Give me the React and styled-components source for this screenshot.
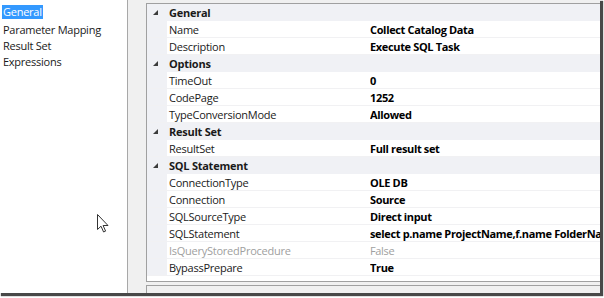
import React from 'react'
import styled, { createGlobalStyle } from 'styled-components'

const GlobalStyle = createGlobalStyle`
    html, body {
        margin: 0;
        padding: 0;
        background: #ffffff;
    }
    body {
        font-family: "Segoe UI", "Open Sans", "Noto Sans", sans-serif;
        font-size: 11px;
        letter-spacing: -0.25px;
        color: #1a1a1a;
    }
`

const pages = ['General', 'Parameter Mapping', 'Result Set', 'Expressions']

const groups = [
    {
        title: 'General',
        rows: [
            { name: 'Name', value: 'Collect Catalog Data' },
            { name: 'Description', value: 'Execute SQL Task' },
        ],
    },
    {
        title: 'Options',
        rows: [
            { name: 'TimeOut', value: '0' },
            { name: 'CodePage', value: '1252' },
            { name: 'TypeConversionMode', value: 'Allowed' },
        ],
    },
    {
        title: 'Result Set',
        rows: [{ name: 'ResultSet', value: 'Full result set' }],
    },
    {
        title: 'SQL Statement',
        rows: [
            { name: 'ConnectionType', value: 'OLE DB' },
            { name: 'Connection', value: 'Source' },
            { name: 'SQLSourceType', value: 'Direct input' },
            { name: 'SQLStatement', value: 'select p.name ProjectName,f.name FolderName' },
            { name: 'IsQueryStoredProcedure', value: 'False', disabled: true },
            { name: 'BypassPrepare', value: 'True' },
        ],
    },
]

function Expander() {
    return (
        <ExpanderBox>
            <svg width="5" height="5" viewBox="0 0 5 5">
                <polygon points="5,0 5,5 0,5" fill="#3c3c3c" />
            </svg>
        </ExpanderBox>
    )
}

function Pointer() {
    return (
        <Cursor>
            <svg width="12" height="19" viewBox="0 0 12 19">
                <path
                    d="M0.5 0.5 L0.5 15.5 L4 12.2 L6.6 18 L8.6 17.1 L6.1 11.5 L11 11.5 Z"
                    fill="#ffffff"
                    stroke="#333333"
                    strokeWidth="1"
                    strokeLinejoin="round"
                />
            </svg>
        </Cursor>
    )
}

function App() {
    return (
        <>
            <GlobalStyle />
            <Frame>
                <Window>
                    <PageList>
                        {pages.map((page, i) => (
                            <PageItem key={page} $selected={i === 0}>
                                <PageLabel $selected={i === 0}>{page}</PageLabel>
                            </PageItem>
                        ))}
                        <Pointer />
                    </PageList>
                    <RightSide>
                        <Grid>
                            {groups.map((group) => (
                                <React.Fragment key={group.title}>
                                    <CategoryRow>
                                        <Gutter $category>
                                            <Expander />
                                        </Gutter>
                                        <CategoryTitle>{group.title}</CategoryTitle>
                                    </CategoryRow>
                                    {group.rows.map((row) => (
                                        <PropRow key={row.name}>
                                            <Gutter />
                                            <PropName $disabled={row.disabled}>{row.name}</PropName>
                                            <PropValue $disabled={row.disabled}>{row.value}</PropValue>
                                        </PropRow>
                                    ))}
                                </React.Fragment>
                            ))}
                        </Grid>
                        <HelpPanel />
                    </RightSide>
                </Window>
            </Frame>
        </>
    )
}

export default App

const Frame = styled.div`
    width: 604px;
    height: 298px;
    overflow: hidden;
    background: #ffffff;
`

const Window = styled.div`
    display: flex;
    width: 600px;
    height: 293px;
    background: #f0f0f0;
    box-shadow: 2px 2px 1px 1px rgba(40, 40, 40, 0.85);
`

const PageList = styled.div`
    position: relative;
    display: flex;
    flex-direction: column;
    width: 128px;
    padding-top: 4px;
    background: #ffffff;
    border-right: 1px solid #a8a8a8;
    box-sizing: border-box;
    flex-shrink: 0;
`

const PageItem = styled.div`
    display: flex;
    align-items: center;
    height: 16px;
    margin-bottom: ${(p) => (p.$selected ? '2px' : '0')};
    padding-left: 2px;
    white-space: nowrap;
`

const PageLabel = styled.span`
    line-height: 14px;
    padding: 0 1px;
    background: ${(p) => (p.$selected ? '#3399ff' : 'transparent')};
    color: ${(p) => (p.$selected ? '#ffffff' : '#1a1a1a')};
`

const Cursor = styled.div`
    position: absolute;
    left: 97px;
    top: 214px;
    line-height: 0;
`

const RightSide = styled.div`
    display: flex;
    flex-direction: column;
    flex: 1;
    min-width: 0;
    padding: 3px 0 0 18px;
    gap: 3px;
`

const Grid = styled.div`
    display: flex;
    flex-direction: column;
    height: 279px;
    box-sizing: border-box;
    background: #ffffff;
    border: 1px solid #a0a0a0;
    border-right: none;
    overflow: hidden;
`

const CategoryRow = styled.div`
    display: flex;
    align-items: center;
    height: 17px;
    flex-shrink: 0;
    background: #f0f1f5;
`

const PropRow = styled.div`
    display: flex;
    align-items: center;
    height: 17px;
    flex-shrink: 0;
    box-sizing: border-box;
    border-bottom: 1px solid #f1f1f3;
`

const Gutter = styled.div`
    display: flex;
    align-items: center;
    justify-content: flex-end;
    align-self: stretch;
    width: 20px;
    padding-right: 9px;
    box-sizing: border-box;
    flex-shrink: 0;
    background: #f0f1f5;
`

const ExpanderBox = styled.span`
    display: flex;
    line-height: 0;
`

const CategoryTitle = styled.div`
    padding-left: 2px;
    font-weight: 700;
    white-space: nowrap;
`

const PropName = styled.div`
    width: 203px;
    padding-left: 2px;
    box-sizing: border-box;
    flex-shrink: 0;
    white-space: nowrap;
    overflow: hidden;
    color: ${(p) => (p.$disabled ? '#a0a0a0' : '#1a1a1a')};
`

const PropValue = styled.div`
    flex: 1;
    min-width: 0;
    white-space: nowrap;
    overflow: hidden;
    letter-spacing: -0.35px;
    font-weight: ${(p) => (p.$disabled ? 400 : 700)};
    color: ${(p) => (p.$disabled ? '#a0a0a0' : '#000000')};
`

const HelpPanel = styled.div`
    flex: 1;
    background: #f0f0f0;
    border: 1px solid #a0a0a0;
    border-bottom: none;
    border-right: none;
`
